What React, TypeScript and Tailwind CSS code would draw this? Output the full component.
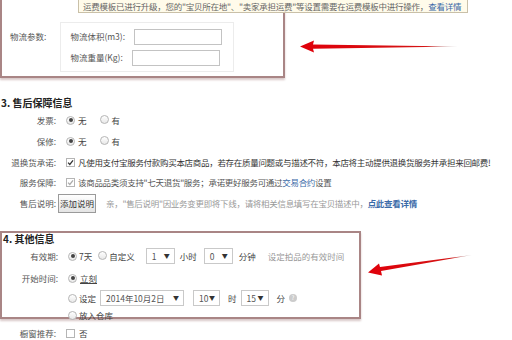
import React from "react";

function Radio({ on }: { on?: boolean }) {
  return (
    <span className="inline-flex h-[9px] w-[9px] shrink-0 items-center justify-center rounded-full border border-[#b5b5b5] bg-gradient-to-b from-white to-[#e8e8e8]">
      {on && <span className="h-[4px] w-[4px] rounded-full bg-[#444]" />}
    </span>
  );
}

function Check({ on, dim }: { on?: boolean; dim?: boolean }) {
  return (
    <span className="inline-flex h-[9px] w-[9px] shrink-0 items-center justify-center border border-[#b5b5b5] bg-white">
      {on && (
        <svg viewBox="0 0 10 10" className="h-[7px] w-[7px]">
          <path d="M1.5 5.2 L4 7.8 L8.6 2" fill="none" stroke={dim ? "#aaa" : "#333"} strokeWidth="1.8" />
        </svg>
      )}
    </span>
  );
}

function Sel({ v, w, cls = "" }: { v: string; w: string; cls?: string }) {
  return (
    <span className={`inline-flex h-[16px] items-center justify-between border border-[#c9c9c9] bg-white pl-[5px] pr-[4px] text-[#555] ${w} ${cls}`}>
      <span>{v}</span>
      <span className="text-[6px] text-[#333]">▼</span>
    </span>
  );
}

function Row({ label, children, cls = "h-[20px]" }: { label: string; children: React.ReactNode; cls?: string }) {
  return (
    <div className={`flex items-center whitespace-nowrap ${cls}`}>
      <div className="w-[56px] shrink-0 text-right text-[#555]">{label}</div>
      <div className="ml-[10px] flex items-center">{children}</div>
    </div>
  );
}

export default function App() {
  return (
    <div
      className="relative h-[340px] w-[512px] overflow-hidden bg-white text-[8.5px] leading-none text-[#444]"
      style={{ fontFamily: '"Noto Sans CJK SC", "Noto Sans", sans-serif' }}
    >
      {/* 物流 section */}
      <div className="h-[78px] w-[285px] border-x-2 border-b-2 border-[#a98585] shadow-[0_2px_2px_#d8c8c8]">
        <div className="ml-[76px] flex h-[13px] w-[390px] items-center whitespace-nowrap border border-t-0 border-[#c9c0a8] bg-[#fffbea] pl-[4px] tracking-[-0.25px] text-[#666]">
          运费模板已进行升级，您的"宝贝所在地"、"卖家承担运费"等设置需要在运费模板中进行操作，
          <span className="text-[#3a6aa8]">查看详情</span>
        </div>
        <div className="mt-[9px] flex">
          <div className="ml-[8px] pt-[10px] text-[#555]">物流参数:</div>
          <div className="ml-[14px] flex h-[50px] w-[174px] flex-col justify-center gap-[5px] border border-[#ececec] pl-[9px]">
            <div className="flex items-center">
              <span className="w-[64px] text-[#555]">物流体积(m3):</span>
              <span className="h-[16px] w-[88px] border border-[#c3c3c3]" />
            </div>
            <div className="flex items-center">
              <span className="w-[62px] text-[#555]">物流重量(Kg):</span>
              <span className="h-[16px] w-[88px] border border-[#c3c3c3]" />
            </div>
          </div>
        </div>
      </div>

      {/* 售后保障 */}
      <div className="mt-[19px] flex h-[12px] items-center pl-[1px] text-[10px] font-bold text-[#222]">3. 售后保障信息</div>
      <div className="mt-[1px]">
        <Row label="发票:" cls="h-[20px]">
          <Radio on /> <span className="ml-[3px]">无</span>
          <span className="ml-[13px]"><Radio /></span> <span className="ml-[3px]">有</span>
        </Row>
        <Row label="保修:" cls="h-[22px]">
          <Radio on /> <span className="ml-[3px]">无</span>
          <span className="ml-[13px]"><Radio /></span> <span className="ml-[3px]">有</span>
        </Row>
        <Row label="退换货承诺:">
          <Check on />
          <span className="ml-[3px] tracking-[-0.3px] text-[#333]">
            凡使用支付宝服务付款购买本店商品，若存在质量问题或与描述不符，本店将主动提供退换货服务并承担来回邮费!
          </span>
        </Row>
        <Row label="服务保障:">
          <Check on dim />
          <span className="ml-[3px] tracking-[-0.3px] text-[#555]">
            该商品品类须支持"七天退货"服务；承诺更好服务可通过<span className="text-[#3a6aa8]">交易合约</span>设置
          </span>
        </Row>
        <div className="flex h-[22px] items-center whitespace-nowrap">
          <div className="w-[56px] shrink-0 text-right text-[#555]">售后说明:</div>
          <span className="ml-[2px] flex h-[19px] w-[38px] items-center justify-center border border-[#9a9a9a] bg-gradient-to-b from-white to-[#e4e4e4] text-[#333]">
            添加说明
          </span>
          <span className="ml-[10px] tracking-[-0.3px] text-[#999]">
            亲，"售后说明"因业务变更即将下线，请将相关信息填写在宝贝描述中，
            <span className="font-bold text-[#3a6aa8]">点此查看详情</span>
          </span>
        </div>
      </div>

      {/* 其他信息 */}
      <div className="mt-[17px] h-[88px] w-[361px] border-2 border-[#a98585] shadow-[0_2px_2px_#d8c8c8]">
        <div className="flex h-[12px] items-center pl-[1px] text-[10px] font-bold text-[#222]">4. 其他信息</div>
        <Row label="有效期:" cls="h-[22px]">
          <Radio on /> <span className="ml-[2px]">7天</span>
          <span className="ml-[6px]"><Radio /></span> <span className="ml-[2px]">自定义</span>
          <Sel v="1" w="w-[29px]" cls="ml-[11px]" />
          <span className="ml-[5px]">小时</span>
          <Sel v="0" w="w-[29px]" cls="ml-[7px]" />
          <span className="ml-[6px]">分钟</span>
          <span className="ml-[12px] text-[#999]">设定拍品的有效时间</span>
        </Row>
        <Row label="开始时间:" cls="h-[22px]">
          <Radio on /> <span className="ml-[3px] underline">立刻</span>
        </Row>
        <div className="ml-[66px] flex h-[18px] items-center whitespace-nowrap">
          <Radio /> <span className="ml-[2px]">设定</span>
          <Sel v="2014年10月2日" w="w-[84px]" cls="ml-[4px]" />
          <Sel v="10" w="w-[27px]" cls="ml-[9px]" />
          <span className="ml-[8px]">时</span>
          <Sel v="15" w="w-[28px]" cls="ml-[4px]" />
          <span className="ml-[8px]">分</span>
          <span className="ml-[4px] inline-flex h-[8px] w-[8px] items-center justify-center rounded-full bg-[#ccc] text-[6px] text-white">?</span>
        </div>
        <div className="ml-[66px] flex h-[16px] items-center whitespace-nowrap">
          <Radio /> <span className="ml-[2px]">放入仓库</span>
        </div>
      </div>
      <div className="mt-[6px]">
        <Row label="橱窗推荐:" cls="h-[16px]">
          <Check /> <span className="ml-[4px]">否</span>
        </Row>
      </div>

      {/* arrows */}
      <svg className="pointer-events-none absolute left-0 top-0" width="512" height="340">
        <defs>
          <linearGradient id="g1" x1="0" x2="1" y1="0" y2="0">
            <stop offset="0" stopColor="#e0000a" />
            <stop offset="0.8" stopColor="#d41414" />
            <stop offset="1" stopColor="#999" stopOpacity="0.6" />
          </linearGradient>
        </defs>
        <path d="M300 46.5 L314 40.5 L313 44.5 L458 46.5 L313 48.8 L314 52.5 Z" fill="url(#g1)" />
        <path d="M368 272.5 L379 263.5 L380 267 L472 255 L381 271 L382 275.5 Z" fill="url(#g1)" />
      </svg>
    </div>
  );
}
